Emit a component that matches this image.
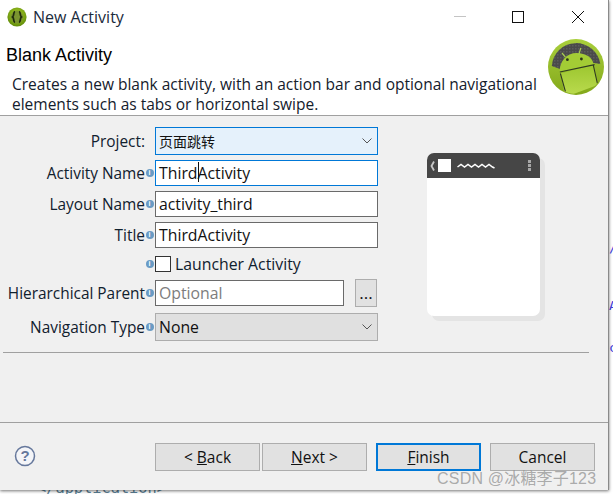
<div class="page">
  <div class="backdrop" aria-hidden="true">
    <span class="code-end">&lt;/application&gt;</span>
    <span class="g g1">/</span>
    <span class="g g2">A</span>
    <span class="g g3">c</span>
  </div>

  <div class="window">
    <div class="titlebar">
      <svg class="appicon" viewBox="0 0 20 20" width="20" height="20">
        <defs>
          <radialGradient id="ai" cx="50%" cy="40%" r="60%">
            <stop offset="0" stop-color="#b4d92e" />
            <stop offset="1" stop-color="#5f8a08" />
          </radialGradient>
        </defs>
        <circle cx="10" cy="10" r="9.6" fill="url(#ai)" />
        <circle cx="10" cy="10" r="6.4" fill="#7b9530" />
        <path d="M8 4.5C6 5 7.4 8.8 5.6 10 7.4 11.2 6 15 8 15.5M12 4.5C14 5 12.6 8.8 14.4 10 12.6 11.2 14 15 12 15.5" fill="none" stroke="#1f2a0c" stroke-width="1.7" />
      </svg>
      <span class="wintitle">New Activity</span>
      <div class="controls">
        <span class="ctl min"></span>
        <span class="ctl max"></span>
        <svg class="ctl close" viewBox="0 0 12 12" width="12" height="12"><path d="M0 0L12 12M12 0L0 12" stroke="#111" stroke-width="1" /></svg>
      </div>
    </div>

    <div class="banner">
      <div class="banner-text">
        <h1>Blank Activity</h1>
        <p>Creates a new blank activity, with an action bar and optional navigational<br />elements such as tabs or horizontal swipe.</p>
      </div>
      <svg class="android" viewBox="0 0 56 56" width="56" height="56">
        <defs>
          <linearGradient id="rim" x1="0" y1="0" x2="0" y2="1">
            <stop offset="0" stop-color="#a9cf3c" />
            <stop offset="1" stop-color="#83a81a" />
          </linearGradient>
          <linearGradient id="body" x1="0" y1="0" x2="0" y2="1">
            <stop offset="0" stop-color="#9cc62f" />
            <stop offset="1" stop-color="#bcdc50" />
          </linearGradient>
          <pattern id="mesh" width="3" height="3" patternUnits="userSpaceOnUse">
            <rect width="3" height="3" fill="#4a4a4a" />
            <rect width="1.5" height="1.5" fill="#5c5c5c" />
          </pattern>
          <clipPath id="inner"><circle cx="28" cy="28" r="27" /></clipPath>
        </defs>
        <circle cx="28" cy="28" r="28" fill="url(#rim)" />
        <path d="M3.8 27A24.4 24.4 0 0 1 52.3 25L46 24 12 30Z" fill="url(#mesh)" />
        <g clip-path="url(#inner)">
          <path d="M12.4 34.5L17.4 58 49.6 46 45.2 25.7Z" fill="url(#body)" />
          <path d="M12 33L45.6 25.8C45 19 38 14 28.5 14 19 14 11 22 11.8 33Z" fill="#a3cc35" />
          <path d="M14 14L17.4 18.2M32.8 9L30.8 15.7" stroke="#a8cf50" stroke-width="1.2" />
          <path d="M11.8 33L46.6 25.6M12.4 34.5L17.4 52.5M45.2 25.7L49.4 44.5" stroke="#2f3a22" stroke-width="1.1" fill="none" />
          <circle cx="19.4" cy="20.7" r="1.4" fill="#2b3318" />
          <circle cx="33.4" cy="20" r="1.4" fill="#2b3318" />
        </g>
      </svg>
    </div>

    <div class="body">
      <div class="content">
        <div class="form">
          <div class="row r-project">
            <span class="label project-label">Project:</span>
            <div class="field select focus-select"><span class="cjk">页面跳转</span><svg class="chev" viewBox="0 0 10 6" width="10" height="6"><path d="M.5.5L5 5 9.5.5" fill="none" stroke="#555" /></svg></div>
          </div>
          <div class="row r-text">
            <span class="label">Activity Name</span><span class="info">i</span>
            <div class="field input focus"><span class="caret-wrap">Third<i class="caret"></i></span>Activity</div>
          </div>
          <div class="row r-text">
            <span class="label">Layout Name</span><span class="info">i</span>
            <div class="field input">activity_third</div>
          </div>
          <div class="row r-text">
            <span class="label">Title</span><span class="info">i</span>
            <div class="field input">ThirdActivity</div>
          </div>
          <div class="row r-check">
            <span class="label"></span><span class="info">i</span>
            <div class="check-wrap"><span class="checkbox"></span><span>Launcher Activity</span></div>
          </div>
          <div class="row r-parent">
            <span class="label">Hierarchical Parent</span><span class="info">i</span>
            <div class="parent">
              <div class="field input optional">Optional</div>
              <div class="dots">...</div>
            </div>
          </div>
          <div class="row r-nav">
            <span class="label">Navigation Type</span><span class="info">i</span>
            <div class="field select plain">None<svg class="chev" viewBox="0 0 10 6" width="10" height="6"><path d="M.5.5L5 5 9.5.5" fill="none" stroke="#555" /></svg></div>
          </div>
        </div>

        <div class="preview">
          <div class="phone-head">
            <svg viewBox="0 0 5 10" width="5" height="10"><path d="M4 .5L1.5 5 4 9.5" fill="none" stroke="#c8c8c8" stroke-width="1.8" /></svg>
            <span class="phone-logo"></span>
            <svg class="zig" viewBox="0 0 38 6" width="38" height="6"><path d="M.5 4L4 1.5 7.5 4 11 1.5 14.5 4 18 1.5 21.5 4 25 1.5 28.5 4 32 1.5 35.5 4 37.5 5" fill="none" stroke="#fff" stroke-width="1.5" /></svg>
            <span class="kebab"><i></i><i></i><i></i></span>
          </div>
        </div>
      </div>
      <div class="rule"></div>
    </div>

    <div class="footer">
      <svg class="help" viewBox="0 0 22 22" width="22" height="22">
        <circle cx="11" cy="11" r="9.5" fill="#f4f5f8" stroke="#66789c" stroke-width="1.5" />
        <text x="11" y="16" text-anchor="middle" class="qm">?</text>
      </svg>
      <div class="buttons">
        <div class="btn back">&lt; <u>B</u>ack</div>
        <div class="btn next"><u>N</u>ext &gt;</div>
        <div class="btn finish"><u>F</u>inish</div>
        <div class="btn cancel">Cancel</div>
      </div>
    </div>
  </div>

  <div class="watermark">CSDN @冰糖李子123</div>
</div>

<style>
  :global(body) {
    margin: 0;
    background: #fff;
  }
  .page {
    position: relative;
    width: 613px;
    height: 494px;
    overflow: hidden;
    font-family: "Open Sans", "Noto Sans", sans-serif;
    font-size: 15.4px;
    color: #10202e;
  }
  .backdrop {
    position: absolute;
    inset: 0;
    font-family: "DejaVu Sans Mono", monospace;
  }
  .code-end {
    position: absolute;
    left: 37px;
    top: 479px;
    font-size: 15.3px;
    color: #5a7f95;
  }
  .g {
    position: absolute;
    left: 609px;
    font-size: 13px;
    color: #4040e0;
  }
  .g1 { top: 240px; }
  .g2 { top: 298px; }
  .g3 { top: 340px; }

  .window {
    position: relative;
    width: 608px;
    height: 490px;
    background: #f0f0f0;
    display: flex;
    flex-direction: column;
    border-right: 1px solid #8a8a8a;
    box-shadow: 0 1px 3px rgba(0, 0, 0, 0.55);
  }
  .titlebar {
    height: 33px;
    background: #fff;
    display: flex;
    align-items: center;
    padding-left: 7px;
    flex: none;
  }
  .appicon { flex: none; }
  .wintitle {
    margin-left: 6px;
    font-size: 16px;
    color: #1b2b3c;
  }
  .controls {
    margin-left: auto;
    display: flex;
    align-items: center;
    padding-right: 24px;
  }
  .ctl { display: block; }
  .min {
    width: 12px;
    height: 1px;
    background: #c4c4c4;
    margin-right: 46px;
  }
  .max {
    width: 10px;
    height: 10px;
    border: 1px solid #111;
    margin-right: 48px;
  }
  .banner {
    height: 82px;
    background: #fff;
    flex: none;
    display: flex;
    justify-content: space-between;
    border-bottom: 1px solid #a0a0a0;
    box-sizing: content-box;
  }
  .banner-text { padding-left: 6px; }
  h1 {
    margin: 12px 0 0;
    font-family: "Liberation Sans", Arial, sans-serif;
    font-size: 18px;
    font-weight: 400;
    line-height: 20px;
    color: #000;
  }
  p {
    margin: 9px 0 0 6px;
    line-height: 20px;
    font-size: 15.5px;
    color: #14202c;
    white-space: nowrap;
  }
  .android {
    flex: none;
    margin: 6px 4px 0 0;
  }
  .body {
    flex: 1;
    display: flex;
    flex-direction: column;
  }
  .content {
    display: flex;
    height: 236px;
  }
  .form {
    width: 378px;
    padding-top: 11px;
    flex: none;
    display: flex;
    flex-direction: column;
  }
  .row {
    display: grid;
    grid-template-columns: 145px 10px 1fr;
    align-items: center;
  }
  .label {
    text-align: right;
    white-space: nowrap;
  }
  .project-label {
    grid-column: 1 / 3;
    padding-right: 10px;
  }
  .r-text { margin-top: 5px; }
  .r-project { height: 28px; }
  .r-text { height: 26px; }
  .r-check { height: 18px; margin-top: 5px; }
  .r-parent { height: 28px; margin-top: 8px; }
  .r-nav { height: 28px; margin-top: 6px; }
  .info {
    width: 8px;
    height: 8px;
    border-radius: 50%;
    background: #6a9bc4;
    color: #fff;
    font: 700 7px/8px "Liberation Sans", sans-serif;
    text-align: center;
    justify-self: center;
    margin-left: -1px;
  }
  .field {
    box-sizing: border-box;
    height: 100%;
    display: flex;
    align-items: center;
    padding-left: 3px;
    white-space: nowrap;
    color: #111;
    font-size: 15.8px;
  }
  .input {
    background: #fff;
    border: 1px solid #6a6a6a;
  }
  .input.focus { border-color: #0078d7; }
  .select {
    position: relative;
    justify-content: flex-start;
  }
  .focus-select {
    background: #e5f1fb;
    border: 1px solid #0078d7;
  }
  .plain {
    background: #e0e0e0;
    border: 1px solid #adadad;
  }
  .cjk {
    font-family: "Noto Sans CJK SC", sans-serif;
    font-size: 14px;
  }
  .chev {
    margin-left: auto;
    margin-right: 5px;
  }
  .caret-wrap { position: relative; }
  .caret {
    position: absolute;
    right: -1px;
    top: 0;
    width: 1px;
    height: 20px;
    background: #111;
  }
  .check-wrap {
    display: flex;
    align-items: center;
    gap: 4px;
    font-size: 15.8px;
  }
  .checkbox {
    box-sizing: border-box;
    width: 16px;
    height: 16px;
    background: #fff;
    border: 1px solid #333;
  }
  .parent {
    display: flex;
    height: 100%;
    align-items: stretch;
  }
  .parent .field {
    width: 189px;
    height: 26px;
    margin-top: 1px;
  }
  .optional { color: #7d7d7d; }
  .dots {
    box-sizing: border-box;
    width: 22px;
    margin-left: 11px;
    border: 1px solid #adadad;
    background: #e1e1e1;
    text-align: center;
    line-height: 26px;
    color: #111;
    font-size: 17px;
  }
  .preview {
    box-sizing: border-box;
    width: 113px;
    height: 163px;
    margin: 37px 0 0 49px;
    background: #fff;
    border-radius: 7px;
    box-shadow: 5px 5px 0 #e4e4e4, 1px 1px 0 #f4f4f4;
    flex: none;
  }
  .phone-head {
    height: 25px;
    background: #464646;
    border-radius: 7px 7px 0 0;
    display: flex;
    align-items: center;
    padding: 0 9px 0 3px;
    gap: 3px;
  }
  .phone-logo {
    width: 13px;
    height: 13px;
    background: #fff;
  }
  .zig { margin-left: 3px; }
  .kebab {
    margin-left: auto;
    display: flex;
    flex-direction: column;
    gap: 1px;
  }
  .kebab i {
    display: block;
    width: 3px;
    height: 3px;
    background: #a8a8a8;
  }
  .rule {
    height: 1px;
    margin: 0 0 0 3px;
    background: #a0a0a0;
    width: 586px;
  }
  .footer {
    height: 68px;
    flex: none;
    position: relative;
    border-top: 1px solid #a0a0a0;
    display: flex;
    align-items: flex-start;
    padding-top: 20px;
    box-sizing: border-box;
  }
  .help {
    flex: none;
    margin: 2px 0 0 14px;
  }
  .qm {
    font: 700 15px "Liberation Sans", sans-serif;
    fill: #66789c;
  }
  .buttons {
    margin-left: 119px;
    display: flex;
  }
  .btn {
    box-sizing: border-box;
    width: 105px;
    height: 28px;
    background: #e1e1e1;
    border: 1px solid #adadad;
    text-align: center;
    line-height: 26px;
    color: #111;
    white-space: nowrap;
    font-size: 15.5px;
  }
  .next { margin-left: 2px; }
  .finish {
    margin-left: 9px;
    border: 2px solid #0078d7;
    line-height: 24px;
  }
  .cancel { margin-left: 9px; }
  .watermark {
    position: absolute;
    left: 437px;
    top: 465px;
    font-family: "Liberation Sans", "Noto Sans CJK SC", sans-serif;
    font-size: 16px;
    letter-spacing: 0.2px;
    color: rgba(130, 130, 130, 0.65);
    white-space: nowrap;
  }
</style>
